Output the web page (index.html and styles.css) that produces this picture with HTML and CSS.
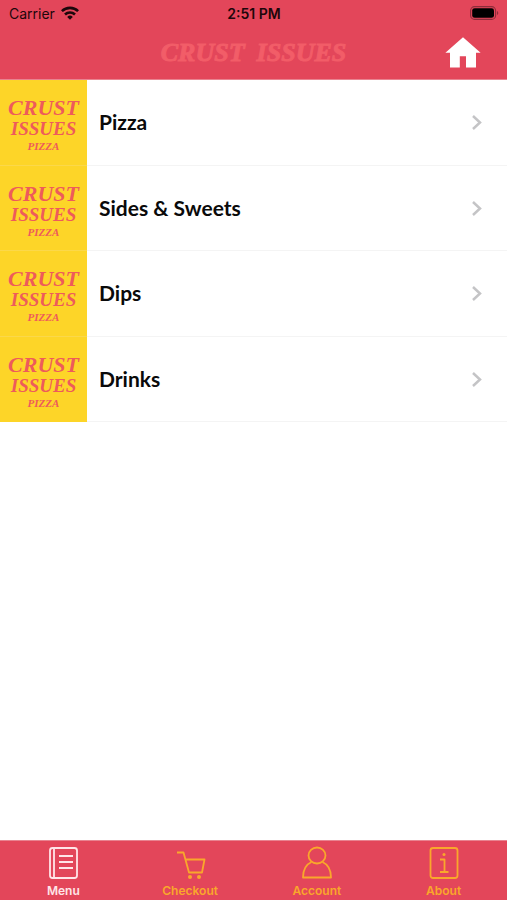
FILE: index.html
```html
<!DOCTYPE html>
<html lang="en">
<head>
<meta charset="utf-8">
<meta name="viewport" content="width=device-width, initial-scale=1">
<title>Crust Issues</title>
<link rel="stylesheet" href="styles.css">
</head>
<body>
<header class="header">
  <div class="status">
    <div class="carrier">
      <span>Carrier</span>
      <svg width="18" height="14" viewBox="0 0 18 14" aria-hidden="true">
        <g fill="none" stroke="#1d070b" stroke-width="2.6"><path d="M.9 5.2a11.5 11.5 0 0 1 16.2 0"/><path d="M4 8.5a7.2 7.2 0 0 1 10 0"/></g>
        <path fill="#1d070b" d="M6.2 10.9a4 4 0 0 1 5.6 0L9 13.8z"/>
      </svg>
    </div>
    <time class="clock">2:51 PM</time>
    <svg class="battery" width="29" height="14" viewBox="0 0 29 14" aria-hidden="true">
      <rect x=".6" y=".6" width="25" height="12.8" rx="4" fill="none" stroke="#8d2c3a" stroke-width="1.1"/>
      <rect x="2.2" y="2.2" width="21.8" height="9.6" rx="2.4"/>
      <path d="M27 5a2.2 2.2 0 0 1 0 4z" fill="#8d2c3a"/>
    </svg>
  </div>
  <div class="titlebar">
    <h1 class="brand"><span>CRUST</span> <span>ISSUES</span></h1>
    <a class="home" href="#" aria-label="Home">
      <svg width="36" height="32" viewBox="0 0 36 32" aria-hidden="true"><path fill="#fff" d="M18 .2 35.6 15.8H31V30.500H21V19.200H14.800V30.500H5V15.800H.4z"/></svg>
    </a>
  </div>
</header>
<main class="main">
  <nav class="list" aria-label="Categories">
    <a class="row" href="#"><span class="tile" aria-hidden="true"><span class="crust">CRUST</span><span class="issues">ISSUES</span><span class="pizza">PIZZA</span></span><span class="name">Pizza</span><svg class="chevron" width="12" height="18" viewBox="0 0 12 18" aria-hidden="true"><path d="m2 3 7 6.500-7 6.500"/></svg></a>
    <a class="row" href="#"><span class="tile" aria-hidden="true"><span class="crust">CRUST</span><span class="issues">ISSUES</span><span class="pizza">PIZZA</span></span><span class="name">Sides &amp; Sweets</span><svg class="chevron" width="12" height="18" viewBox="0 0 12 18" aria-hidden="true"><path d="m2 3 7 6.500-7 6.500"/></svg></a>
    <a class="row" href="#"><span class="tile" aria-hidden="true"><span class="crust">CRUST</span><span class="issues">ISSUES</span><span class="pizza">PIZZA</span></span><span class="name">Dips</span><svg class="chevron" width="12" height="18" viewBox="0 0 12 18" aria-hidden="true"><path d="m2 3 7 6.500-7 6.500"/></svg></a>
    <a class="row" href="#"><span class="tile" aria-hidden="true"><span class="crust">CRUST</span><span class="issues">ISSUES</span><span class="pizza">PIZZA</span></span><span class="name">Drinks</span><svg class="chevron" width="12" height="18" viewBox="0 0 12 18" aria-hidden="true"><path d="m2 3 7 6.500-7 6.500"/></svg></a>
  </nav>
</main>
<nav class="tabs" aria-label="Main">
  <a class="tab active" href="#" aria-current="page">
    <svg width="32" height="34" viewBox="0 0 32 34" aria-hidden="true"><rect x="3" y="2" width="27" height="30" rx="2.500"/><path d="M7 2v30M12 10h14M12 16h14M12 22h14"/></svg>
    <span>Menu</span>
  </a>
  <a class="tab" href="#">
    <svg width="32" height="34" viewBox="0 0 32 34" aria-hidden="true"><path d="M3 6.500h6.500l5.500 20h13l2.500-13H11.500"/><g fill="#f9a72b" stroke="none"><circle cx="16" cy="31" r="2"/><circle cx="25" cy="31" r="2"/></g></svg>
    <span>Checkout</span>
  </a>
  <a class="tab" href="#">
    <svg width="32" height="34" viewBox="0 0 32 34" aria-hidden="true"><ellipse cx="16" cy="9.500" rx="8.500" ry="8"/><path d="M10.500 16C5 18.500 2 23 2 31.500h28C30 23 27 18.500 21.500 16"/></svg>
    <span>Account</span>
  </a>
  <a class="tab" href="#">
    <svg width="32" height="34" viewBox="0 0 32 34" aria-hidden="true"><rect x="2.500" y="2" width="27" height="30" rx="2.500"/><path d="M12 13.500h4.500V26M12 26h8.500"/><circle cx="16" cy="8.500" r="1.500" fill="#f9a72b" stroke="none"/></svg>
    <span>About</span>
  </a>
</nav>
</body>
</html>
```
FILE: styles.css
```css
* { box-sizing: border-box; }
body {
  margin: 0;
  min-height: 100vh;
  display: flex;
  flex-direction: column;
  background: #fff;
  font-family: Inter, "Liberation Sans", sans-serif;
}
a { color: inherit; text-decoration: none; }
svg { display: block; flex: none; }

.header { background: #e3465a; color: #1d070b; border-bottom: 1px solid #e98390; }
.status {
  display: grid;
  grid-template-columns: 1fr auto 1fr;
  align-items: center;
  height: 26px;
  padding: 0 8px 0 9px;
  font-size: 14px;
}
.carrier { display: flex; align-items: center; gap: 6px; }
.clock { font-weight: 600; }
.battery { justify-self: end; }
.titlebar {
  display: grid;
  grid-template-columns: 1fr auto 1fr;
  align-items: center;
  height: 53px;
  padding: 0 26px;
}
.brand {
  grid-column: 2;
  display: flex;
  gap: 12px;
  margin: 0;
  color: #f25d68;
  font: italic bold 26px/1 "Liberation Serif", serif;
  -webkit-text-stroke: 1px #f25d68;
}
.home { justify-self: end; }

.main { flex: 1; }
.list {
  display: grid;
  grid-template-rows: repeat(4, 1fr);
  min-height: 342px;
}
.row {
  display: flex;
  align-items: center;
  padding-right: 24px;
  border-bottom: 1px solid #f4f4f4;
}
.tile {
  display: flex;
  flex-direction: column;
  align-items: center;
  justify-content: center;
  align-self: stretch;
  width: 87px;
  padding-top: 6px;
  background: #fdd528;
  color: #ee5b5b;
  font-family: "Liberation Serif", serif;
  font-style: italic;
  font-weight: bold;
}
.row + .row .tile { box-shadow: 0 -1px #fbd84a; }
.row:last-child .tile { box-shadow: 0 -1px #fbd84a, 0 1px #fdd528; }
.crust { font-size: 22px; line-height: 22px; }
.issues { font-size: 19px; line-height: 20px; }
.pizza { font-size: 11px; line-height: 14px; }
.name {
  flex: 1;
  padding-left: 12px;
  color: #0a0a0a;
  font: bold 21px/26px Lato, sans-serif;
}
.chevron { fill: none; stroke: #c4c4c6; stroke-width: 2.5; }

.tabs {
  display: grid;
  grid-template-columns: repeat(4, 1fr);
  height: 60px;
  background: #e3465a;
  border-top: 1px solid #e98390;
}
.tab {
  display: flex;
  flex-direction: column;
  align-items: center;
  padding-top: 5px;
  color: #f9a72b;
  font-size: 12px;
  font-weight: 600;
  line-height: 16px;
  gap: 3px;
}
.tab.active { color: #ffe5e8; }
.tab svg { fill: none; stroke: currentColor; stroke-width: 1.8; stroke-linejoin: round; }
```
